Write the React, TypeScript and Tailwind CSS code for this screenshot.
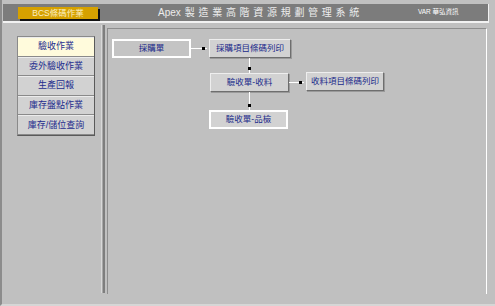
import React from 'react';

const menu = ['驗收作業', '委外驗收作業', '生產回報', '庫存盤點作業', '庫存/儲位查詢'];

function Box({ label, w, kind }: { label: string; w: string; kind: 'frame' | 'bevel' | 'framelight' }) {
  const cls =
    kind === 'bevel'
      ? 'bg-[#d2d2d2] border border-t-[#eeeeee] border-l-[#eeeeee] border-b-[#6e6e6e] border-r-[#6e6e6e] shadow-[1px_1px_0_#9a9a9a]'
      : kind === 'frame'
      ? 'bg-[#c4c4c4] border-2 border-white'
      : 'bg-[#d2d2d2] border-2 border-white';
  return (
    <div className={`${w} h-[19px] shrink-0 flex items-center justify-center text-[8.5px] text-[#1b2a8a] ${cls}`}>
      {label}
    </div>
  );
}

// horizontal connector with the little black end mark
function HConn({ w }: { w: string }) {
  return (
    <div className={`${w} shrink-0 flex items-center justify-end pr-[2px]`}>
      <div className="flex-1 h-[1px] bg-white" />
      <div className="w-[3px] h-[3px] bg-black" />
      <div className="w-[2px] h-[1px] bg-white" />
    </div>
  );
}

function VConn({ h }: { h: string }) {
  return (
    <div className="w-[80px] flex justify-center">
      <div className={`${h} flex flex-col items-center`}>
        <div className="flex-1 w-[1px] bg-white" />
        <div className="w-[3px] h-[3px] bg-black" />
        <div className="h-[3px] w-[1px] bg-white" />
      </div>
    </div>
  );
}

export default function App() {
  return (
    <div
      className="w-[495px] h-[306px] bg-[#c0c0c0] overflow-hidden border-l-2 border-[#8c8c8c] border-b-2 border-b-[#d6d6d6]"
      style={{ fontFamily: '"Liberation Sans", "Noto Sans CJK TC", sans-serif' }}
    >
      {/* header */}
      <div className="ml-[1px] mt-[4px] w-[486px] h-[19px] bg-[#7c7c7c] border-r border-b-2 border-[#f2f2f2] flex items-center">
        <div className="ml-[15px] mt-[1px] w-[80px] h-[12px] bg-[#d6a100] shadow-[2px_2px_0_#111] flex items-center justify-center text-[8.5px] leading-none text-[#fbefc4]">
          BCS條碼作業
        </div>
        <div className="ml-[60px] text-[10px] leading-none text-[#ececec] tracking-[3.7px] whitespace-nowrap">
          <span className="tracking-normal mr-[4px]">Apex</span>製造業高階資源規劃管理系統
        </div>
        <div className="ml-[55px] text-[6.5px] leading-none text-white whitespace-nowrap">VAR 華弘資訊</div>
      </div>

      <div className="flex mt-[2px]">
        {/* sidebar */}
        <div className="w-[99px] pt-[11px] pl-[15px]">
          <div className="w-[78px] border-l border-t border-[#8a8a8a] border-r border-b border-r-[#5a5a5a] border-b-[#5a5a5a]">
            {menu.map((m, i) => (
              <div
                key={m}
                className={`h-[19.6px] flex items-center justify-center text-[9px] leading-none text-[#1d2c8e] border-b border-b-[#8a8a8a] border-t border-t-[#ececec] ${
                  i === 0 ? 'bg-[#fffbdc]' : 'bg-[#d2d2d2]'
                }`}
              >
                {m}
              </div>
            ))}
          </div>
        </div>

        {/* divider */}
        <div className="w-[4px] h-[268px] bg-[#a8a8a8] border-l border-[#d8d8d8] border-r-2 border-r-[#7e7e7e]" />

        {/* main canvas with flow chart */}
        <div className="mt-[3px] ml-[2px] w-[380px] h-[266px] border-t border-l border-[#8e8e8e] border-r border-r-white pl-[4px] pt-[10px]">
          <div className="flex items-center">
            <Box label="採購單" w="w-[79px]" kind="frame" />
            <HConn w="w-[18px]" />
            <Box label="採購項目條碼列印" w="w-[82px]" kind="bevel" />
          </div>
          <div className="ml-[97px] flex flex-col items-start">
            <VConn h="h-[15px]" />
            <div className="flex items-center pl-[1px]">
              <Box label="驗收單-收料" w="w-[79px]" kind="bevel" />
              <HConn w="w-[17px]" />
              <div className="-mt-[2px]">
                <Box label="收料項目條碼列印" w="w-[78px]" kind="bevel" />
              </div>
            </div>
            <VConn h="h-[18px]" />
            <Box label="驗收單-品檢" w="w-[79px]" kind="framelight" />
          </div>
        </div>
      </div>
    </div>
  );
}
